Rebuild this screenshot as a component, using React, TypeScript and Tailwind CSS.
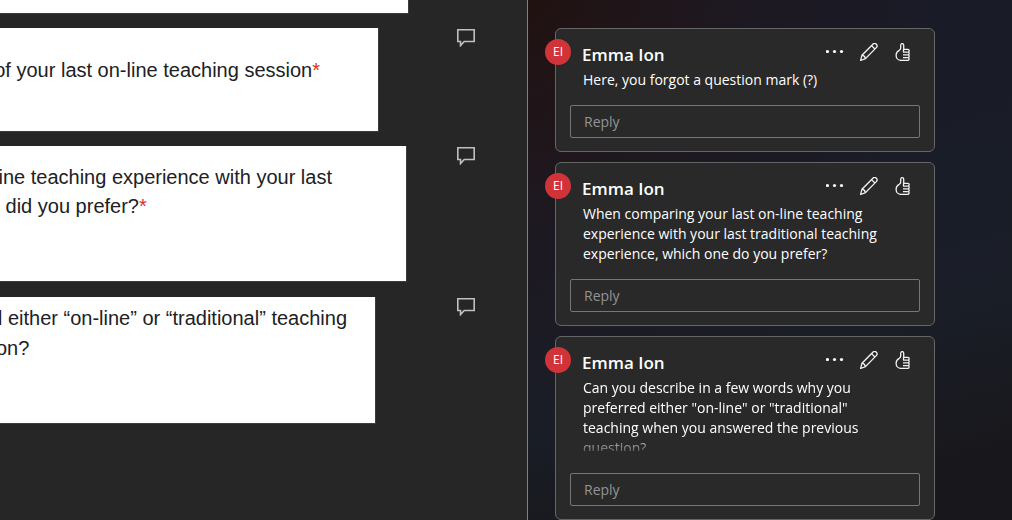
import { useState } from "react";
import type { ReactNode } from "react";

const comments = [
  { id: 1, author: "Emma Ion", initials: "EI", text: "Here, you forgot a question mark (?)" },
  {
    id: 2,
    author: "Emma Ion",
    initials: "EI",
    text: "When comparing your last on-line teaching\nexperience with your last traditional teaching\nexperience, which one do you prefer?",
  },
  {
    id: 3,
    author: "Emma Ion",
    initials: "EI",
    text: 'Can you describe in a few words why you\npreferred either "on-line" or "traditional"\nteaching when you answered the previous\nquestion?',
    collapsed: true,
  },
];

const MarkerIcon = () => (
  <svg className="h-[18px] w-[18px]" viewBox="0 0 18 18" fill="none" stroke="#c0c0c0" strokeWidth="1.6">
    <path d="M.8.8h16.4v11.7H7.2L3.5 16.6v-4.1H.8z" />
  </svg>
);

const DotsIcon = () => (
  <svg className="h-[18px] w-[18px]" viewBox="0 0 18 18" fill="#fff">
    <circle cx="1.5" cy="8.5" r="1.6" />
    <circle cx="8.5" cy="8.5" r="1.6" />
    <circle cx="15.5" cy="8.5" r="1.6" />
  </svg>
);

const PencilIcon = () => (
  <svg className="h-[18px] w-[18px]" viewBox="0 0 18 18" fill="none" stroke="#f2f2f2" strokeWidth="1.3">
    <path d="M.6 17.4l1.400-5.200L12.900 1.200a2.300 2.300 0 0 1 3.400 3.400L5.400 15.800z" />
    <path d="M2 12.200c1.900.3 3.100 1.700 3.400 3.600M11.500 2.600l3.400 3.400" />
  </svg>
);

const ThumbIcon = () => (
  <svg className="h-[18px] w-[18px]" viewBox="0 0 18 18" fill="none" stroke="#f2f2f2" strokeWidth="1.3">
    <path d="M9.500 17.400H7C4 17.400 2.100 15.200 2.100 12.200c0-2.500 1.200-4 3.100-4.900 1.100-.6 1.500-1.200 1.500-2.400V2.300c0-1 .7-1.700 1.500-1.700s1.500.7 1.500 1.700v3.900" />
    <path d="M9.200 6.300h4.700c1 0 1.300.6 1.300 1.400s-.3 1.400-1.300 1.400c1 0 1.300.6 1.300 1.400s-.3 1.400-1.300 1.400c1 0 1.300.6 1.300 1.400s-.3 1.400-1.300 1.400c1 0 1.200.6 1.200 1.300s-.4 1.400-1.300 1.400H9" />
    <path d="M9 9.100h4.900M9 11.900h4.900M9 14.700h4.900M9.500 6.300v3" />
  </svg>
);

const Paper = ({ className, children, marker = true }: { className: string; children?: ReactNode; marker?: boolean }) => (
  <div className="flex items-start pr-[52px]">
    <div
      className={`min-w-0 flex-1 overflow-hidden whitespace-pre border-r border-b border-[#3c3c3c] bg-white text-[20px] text-[#202124] ${className}`}
    >
      {children}
    </div>
    {marker ? (
      <button aria-label="Show comment" className="w-[18px] pt-px">
        <MarkerIcon />
      </button>
    ) : (
      <div className="w-[18px]" />
    )}
  </div>
);

// Line that runs in from outside the left edge of the pane
const CutLine = ({ children }: { children: ReactNode }) => <div className="flex justify-end">{children}</div>;

const Required = () => <span className="text-[#d93025]">*</span>;

const Comment = ({ author, initials, text, collapsed }: (typeof comments)[number]) => {
  const [reply, setReply] = useState("");

  return (
    <article className="relative rounded-md border border-[#666] bg-[#292929] px-3.5 pb-[13px]">
      <div className="absolute top-2.5 -left-[11px] flex h-[26px] w-[26px] items-center justify-center rounded-full bg-[#d13438] text-xs text-white">
        {initials}
      </div>
      <div className="flex h-[41px] items-start justify-between pr-2 pl-3">
        <h2 className="pt-3.5 text-[17px] leading-6 font-semibold text-white">{author}</h2>
        <div className="flex gap-4 pt-3.5">
          <button aria-label="More actions"><DotsIcon /></button>
          <button aria-label="Edit"><PencilIcon /></button>
          <button aria-label="Like"><ThumbIcon /></button>
        </div>
      </div>
      <p
        className={`pl-[13px] text-[14px] leading-5 whitespace-pre-line text-white ${
          collapsed
            ? "mb-[22px] h-[73px] overflow-hidden [mask-image:linear-gradient(black_55px,transparent_80px)]"
            : "mb-[15px]"
        }`}
      >
        {text}
      </p>
      <input
        aria-label="Reply"
        placeholder="Reply"
        value={reply}
        onChange={(e) => setReply(e.target.value)}
        className="block h-[33px] w-full rounded-xs border border-[#767676] bg-transparent px-[13px] text-[14px] text-white placeholder:text-[#949494] outline-none"
      />
    </article>
  );
};

export default function App() {
  return (
    <div className="flex h-screen overflow-hidden bg-[#262626]">
      <main className="flex min-w-0 flex-1 flex-col gap-3.5 border-r border-[#808080] font-['Liberation_Sans',Arial,sans-serif]">
        <Paper className="mr-12 h-3.5" marker={false} />
        <Paper className="mr-[78px] h-[104px] pt-7 leading-[29px]">
          <CutLine>
            <span className="pr-[58px]">of your last on-line teaching session<Required /></span>
          </CutLine>
        </Paper>
        <Paper className="mr-[50px] mb-px h-[136px] pt-[17px] leading-[29px]">
          <CutLine>
            <span className="pr-[74px]">ine teaching experience with your last</span>
          </CutLine>
          <div> did you prefer?<Required /></div>
        </Paper>
        <Paper className="mr-[81px] h-[127px] pt-1.5 leading-[30px]">
          <CutLine>
            <span className="pr-7">d either “on-line” or “traditional” teaching</span>
          </CutLine>
          <div className="-indent-1">on?</div>
        </Paper>
      </main>
      <aside className="flex w-[484px] shrink-0 flex-col gap-2.5 bg-[radial-gradient(ellipse_at_0%_0%,#211211_0%,#21141a80_30%,transparent_60%),linear-gradient(165deg,#191b27_0%,#1a1e27_65%,#18171b_90%)] pt-7 pr-[77px] pl-[27px] font-['Open_Sans','Noto_Sans',sans-serif]">
        {comments.map((c) => (
          <Comment key={c.id} {...c} />
        ))}
      </aside>
    </div>
  );
}
